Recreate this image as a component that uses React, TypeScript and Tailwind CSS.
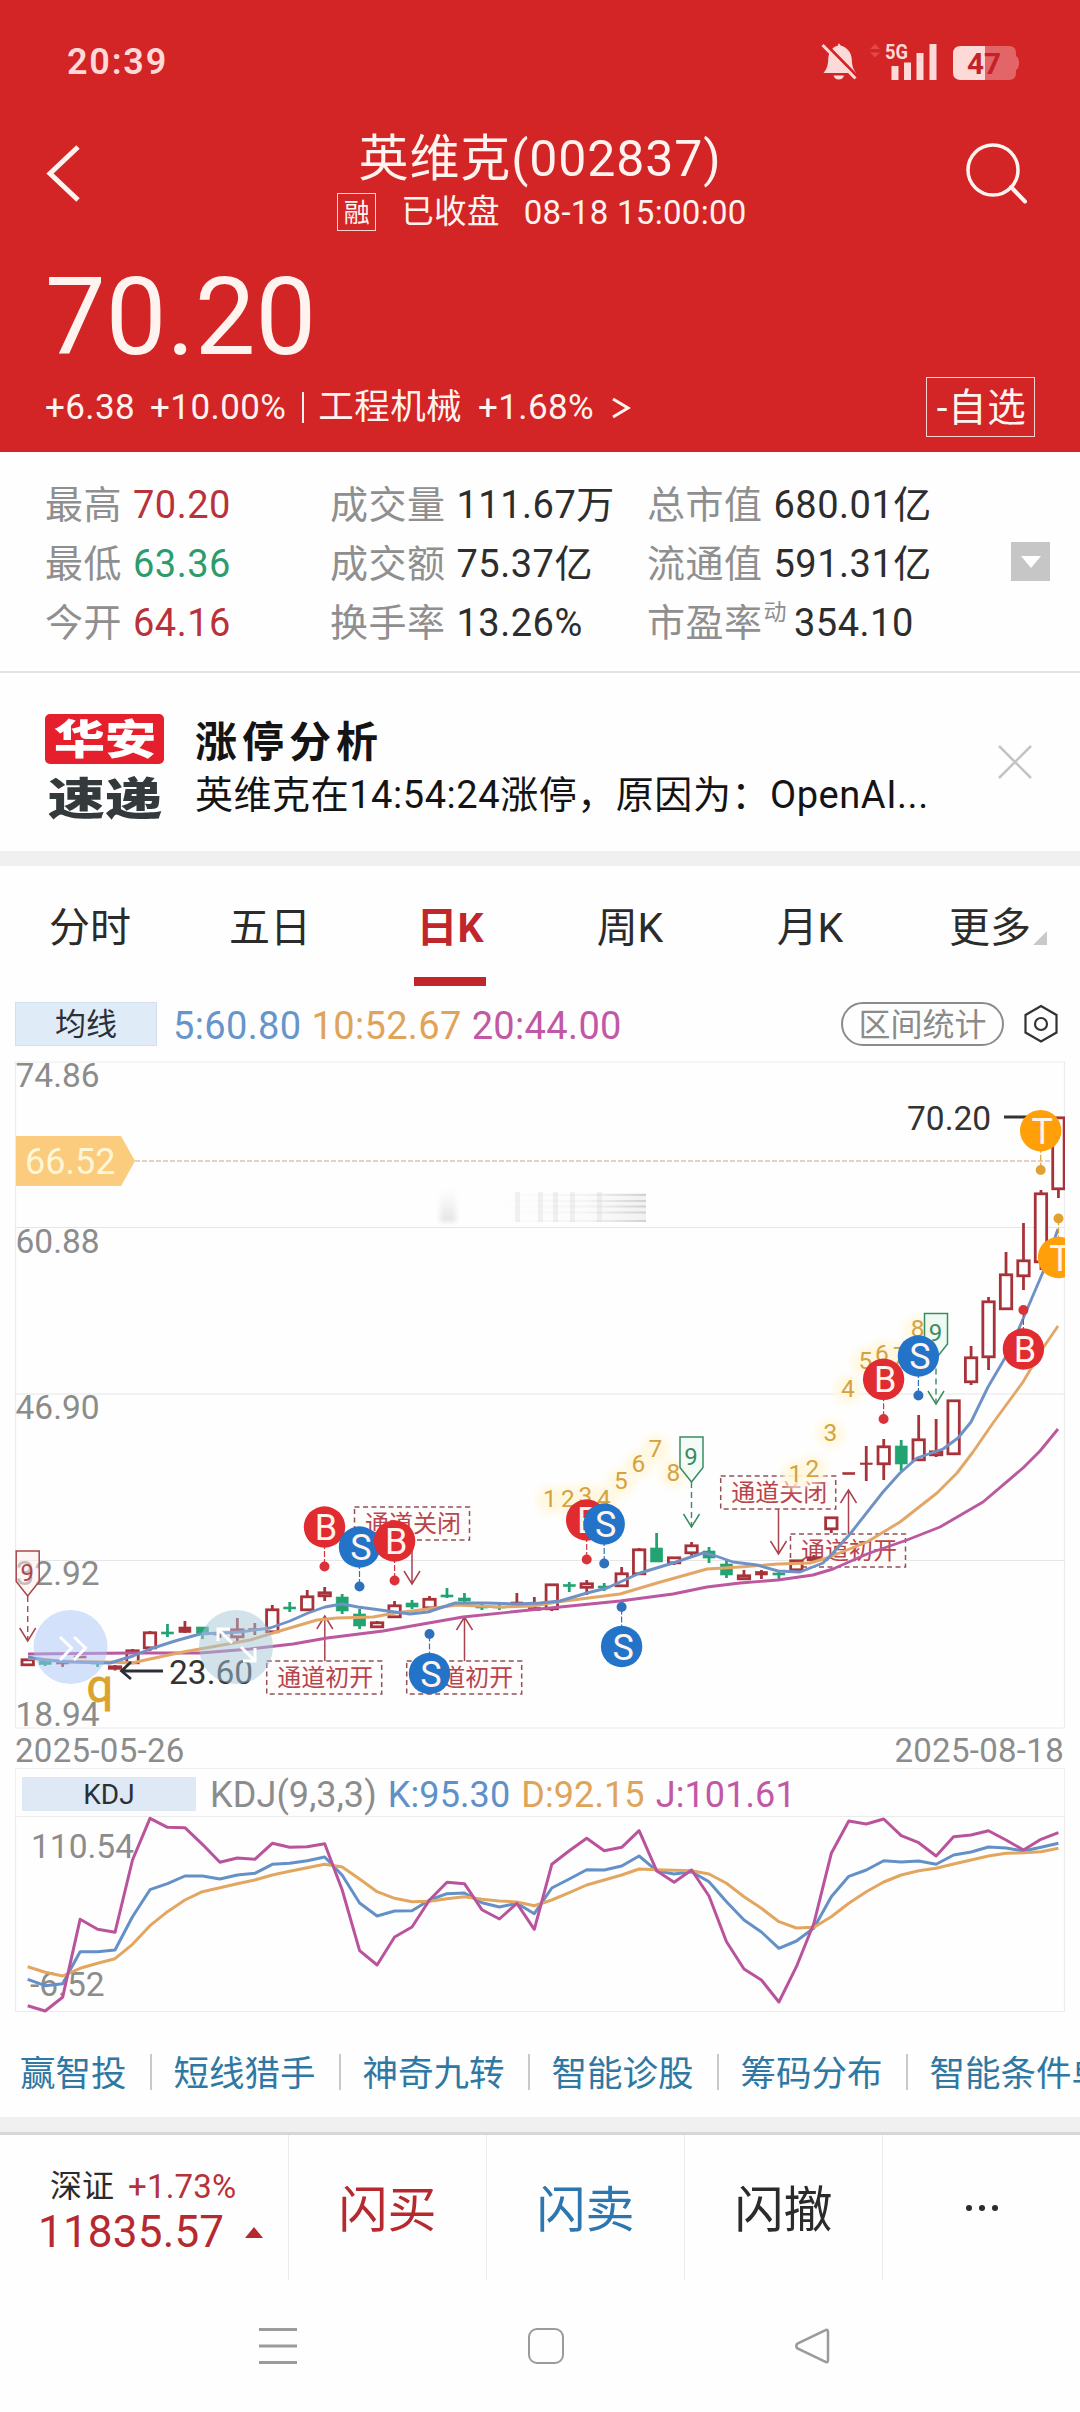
import React from 'react';

type Kind = 'up' | 'down';

// [kind, high, bodyTop, bodyBottom, low, solid?]
type Candle = [Kind, number, number, number, number, boolean?];

const STEP = 17.47;
const START_X = 27.7;
const candleX = (i: number) => START_X + i * STEP;

const UP = '#a8323a';
const DOWN = '#22a472';

const candles: Candle[] = [
    ['up', 1659, 1659, 1665, 1665],
    ['down', 1658, 1659.5, 1664.5, 1666],
    ['up', 1660, 1662, 1664, 1667, true],
    ['up', 1656, 1656, 1658, 1658, true],
    ['down', 1661, 1663, 1664, 1667],
    ['up', 1665, 1666, 1668.5, 1670.5],
    ['up', 1649, 1650, 1663, 1664],
    ['up', 1631, 1632, 1648, 1651],
    ['down', 1624, 1632, 1634, 1637],
    ['up', 1621, 1627, 1632.5, 1633, true],
    ['down', 1627, 1627, 1633, 1639],
    ['up', 1630, 1633, 1635, 1638, true],
    ['up', 1618, 1629, 1637, 1641],
    ['up', 1623, 1628.5, 1630, 1635, true],
    ['up', 1605, 1609, 1632, 1632],
    ['down', 1602, 1607, 1609, 1612],
    ['up', 1590, 1596, 1610, 1611],
    ['up', 1587, 1592, 1596, 1601],
    ['down', 1594, 1597, 1611, 1614],
    ['down', 1609, 1614, 1626, 1629],
    ['up', 1621, 1622, 1627, 1628],
    ['up', 1601, 1605, 1617, 1618],
    ['down', 1600, 1603, 1607, 1609],
    ['up', 1596, 1598.5, 1608, 1613],
    ['down', 1588, 1595, 1597, 1598],
    ['down', 1593, 1598, 1601, 1602],
    ['down', 1604, 1606, 1608, 1610],
    ['down', 1604, 1607, 1608, 1610],
    ['up', 1593, 1602, 1603, 1604, true],
    ['up', 1597, 1607.5, 1610.5, 1611, true],
    ['up', 1584, 1584, 1609, 1611],
    ['down', 1582, 1584.5, 1586.5, 1592],
    ['up', 1580, 1583, 1587.5, 1595],
    ['down', 1583, 1586, 1588, 1591],
    ['up', 1567, 1573, 1586, 1587],
    ['up', 1548, 1549, 1574, 1574],
    ['down', 1533, 1548, 1562, 1562],
    ['up', 1557, 1557, 1563, 1565],
    ['up', 1542, 1545, 1553, 1557],
    ['down', 1547, 1551, 1558, 1563],
    ['down', 1560, 1564, 1575, 1578],
    ['up', 1570, 1575, 1579, 1580],
    ['up', 1570, 1571.5, 1575, 1579, true],
    ['down', 1570, 1573, 1575, 1579],
    ['up', 1560, 1560, 1570, 1573],
    ['up', 1555, 1557, 1560, 1562],
    ['up', 1517, 1517, 1529, 1533],
    ['up', 1473, 1472.5, 1474.5, 1474, true],
    ['up', 1446, 1463, 1464.5, 1481, true],
    ['up', 1439, 1446, 1464, 1480],
    ['down', 1440, 1446, 1464, 1471],
    ['up', 1415, 1439, 1460, 1461],
    ['up', 1419, 1451, 1455, 1457],
    ['up', 1400, 1400, 1454, 1454],
    ['up', 1346, 1357, 1382, 1385],
    ['up', 1297, 1301, 1357, 1370],
    ['up', 1252, 1274, 1309, 1309],
    ['up', 1223, 1260, 1276, 1290],
    ['up', 1190, 1193, 1262, 1270],
    ['up', 1117, 1117, 1189, 1198],
];

const ma5 = '28,1657 45,1660 70,1662 110,1663 133,1656 150,1649 175,1641 200,1634 240,1632 270,1628 290,1621 308,1613 325,1607 342,1604 358,1607 395,1612 410,1614 428,1612 455,1603 487,1603 517,1604 540,1603 560,1601 587,1593 607,1588 640,1573 673,1563 703,1553 713,1555 733,1562 757,1565 778,1571 800,1572 823,1563 833,1553 850,1534 883,1492 900,1473 917,1458 943,1449 958,1438 971,1422 988,1387 1005,1358 1017,1333 1043,1272 1058,1229';
const ma10 = '28,1658 60,1661 107,1662 132,1663 150,1659 183,1652 217,1646 250,1640 283,1630 317,1620 337,1618 373,1617 395,1613 420,1610 457,1605 500,1607 533,1606 557,1602 620,1594 657,1583 707,1569 740,1567 778,1564 810,1563 827,1558 867,1542 900,1522 937,1493 957,1473 973,1452 993,1423 1023,1382 1043,1348 1058,1326';
const ma20 = '28,1654 133,1653 200,1653 250,1649 293,1644 327,1638 383,1631 463,1617 540,1609 620,1601 673,1594 707,1587 740,1583 778,1580 813,1575 833,1569 867,1554 907,1540 940,1527 983,1502 1023,1468 1040,1451 1058,1429';

const kdjJ = [857, 873, 832, 598, 628, 637, 420, 295, 322, 323, 373, 427, 414, 418, 370, 382, 380, 371, 510, 692, 735, 651, 621, 540, 487, 491, 569, 597, 550, 628, 433, 392, 355, 392, 382, 332, 452, 487, 450, 528, 665, 747, 780, 846, 740, 610, 400, 303, 312, 297, 347, 368, 408, 350, 345, 332, 360, 390, 358, 338];
const kdjK = [778, 797, 791, 695, 695, 690, 590, 509, 491, 468, 468, 477, 465, 460, 433, 430, 422, 411, 466, 549, 588, 573, 572, 540, 521, 519, 548, 561, 550, 581, 504, 477, 449, 450, 438, 408, 452, 462, 455, 485, 545, 600, 636, 685, 663, 624, 530, 469, 450, 422, 426, 423, 433, 405, 396, 381, 384, 393, 382, 370];
const kdjD = [740, 757, 768, 745, 730, 716, 673, 617, 575, 540, 515, 503, 491, 480, 465, 454, 443, 433, 441, 477, 515, 535, 545, 544, 536, 530, 538, 543, 546, 557, 540, 518, 495, 480, 465, 447, 449, 451, 452, 462, 490, 530, 565, 605, 624, 622, 590, 550, 515, 486, 465, 452, 445, 432, 420, 408, 400, 398, 395, 385];

const toLine = (values: number[]) =>
    values.map((v, i) => `${candleX(i).toFixed(1)},${(1720 + v / 3).toFixed(1)}`).join(' ');

interface MarkerProps {
    x: number;
    y: number;
    dot: number;
    label: 'B' | 'S' | 'T';
}

const markerColors = { B: '#e02b30', S: '#2374c8', T: '#ff9f0a' };
const dotColors = { B: '#d8333a', S: '#2f70bd', T: '#dfa232' };

const Marker: React.FC<MarkerProps> = ({ x, y, dot, label }) => (
    <g>
        <line x1={x} y1={y} x2={x} y2={dot} stroke={dotColors[label]} strokeWidth="1.2" strokeDasharray="6 2" />
        <circle cx={x} cy={dot} r="5" fill={dotColors[label]} />
        <circle cx={x} cy={y} r="20.7" fill={markerColors[label]} />
        <text x={x + 1.5} y={y + 13} fontSize="36" textAnchor="middle" fill="#fff3ee">{label}</text>
    </g>
);

const markers: MarkerProps[] = [
    { x: 324.5, y: 1527, dot: 1566.5, label: 'B' },
    { x: 359.5, y: 1547, dot: 1586.5, label: 'S' },
    { x: 394.6, y: 1541, dot: 1580.5, label: 'B' },
    { x: 429.5, y: 1673.5, dot: 1634, label: 'S' },
    { x: 586.7, y: 1520, dot: 1559.5, label: 'B' },
    { x: 604.2, y: 1524, dot: 1563.5, label: 'S' },
    { x: 621.6, y: 1646.5, dot: 1607, label: 'S' },
    { x: 883.6, y: 1379.3, dot: 1419, label: 'B' },
    { x: 918.4, y: 1356, dot: 1395.5, label: 'S' },
    { x: 1023.4, y: 1349, dot: 1310, label: 'B' },
    { x: 1040.7, y: 1130.7, dot: 1170, label: 'T' },
    { x: 1058.5, y: 1257.5, dot: 1218.5, label: 'T' },
];

interface ChannelProps {
    x: number;
    y: number;
    text: string;
    arrowX: number;
    tip: number;
}

const Channel: React.FC<ChannelProps> = ({ x, y, text, arrowX, tip }) => {
    const down = tip > y;
    const from = down ? y + 33 : y;
    const d = down ? -13 : 13;
    return (
        <g>
            <path d={`M${arrowX} ${from}V${tip}M${arrowX - 8} ${tip + d}L${arrowX} ${tip}L${arrowX + 8} ${tip + d}`} fill="none" stroke="#a8434f" strokeWidth="1.5" />
            <rect x={x} y={y} width="115" height="33" fill="#fffafa" fillOpacity="0.5" stroke="#905058" strokeWidth="1.5" strokeDasharray="5 3.5" />
            <text x={x + 10.5} y={y + 24.500} fontSize="24" fill="#b8444c">{text}</text>
        </g>
    );
};

const channels: ChannelProps[] = [
    { x: 354.5, y: 1507, text: '通道关闭', arrowX: 412, tip: 1584 },
    { x: 266.7, y: 1661, text: '通道初开', arrowX: 324.8, tip: 1616 },
    { x: 406.7, y: 1661, text: '通道初开', arrowX: 464.5, tip: 1617 },
    { x: 720.7, y: 1476, text: '通道关闭', arrowX: 778.5, tip: 1554 },
    { x: 790.5, y: 1534, text: '通道初开', arrowX: 848.5, tip: 1490 },
];

const counts: [string, number, number][] = [
    ['1', 550, 1507], ['2', 568, 1507], ['3', 585.5, 1504], ['4', 604, 1507],
    ['5', 621, 1489], ['6', 638.5, 1471.5], ['7', 655.5, 1456.5], ['8', 673.5, 1481],
    ['1', 795.5, 1482], ['2', 812.5, 1476.5], ['3', 830.5, 1440.5], ['4', 848, 1396.5],
    ['5', 865.5, 1368.5], ['6', 882, 1361.5], ['7', 900, 1364], ['8', 917.7, 1337],
];

interface NineTagProps {
    x: number;
    y: number;
    end: number;
    stroke: string;
    fill: string;
    baseline: number;
}

const NineTag: React.FC<NineTagProps> = ({ x, y, end, stroke, fill, baseline }) => (
    <g>
        <path d={`M${x - 11.5} ${y}H${x + 11.5}V${y + 30.5}L${x} ${y + 45}L${x - 11.5} ${y + 30.5}Z`} fill={fill} fillOpacity="0.5" stroke={stroke} strokeWidth="1.5" />
        <line x1={x} y1={y + 45} x2={x} y2={end} stroke={stroke} strokeWidth="1.4" strokeDasharray="6 4" />
        <path d={`M${x - 8} ${end - 13}L${x} ${end}L${x + 8} ${end - 13}`} fill="none" stroke={stroke} strokeWidth="1.5" />
        <text x={x - 0.5} y={baseline} fontSize="24" textAnchor="middle" fill={stroke}>9</text>
    </g>
);

const StatusBar = () => (
    <div className="flex h-[124px] items-center justify-between pl-[67px] pr-[60px]">
        <span className="text-[36px] font-semibold leading-none tracking-[1.8px] text-[#fdd9d7]">20:39</span>
        <svg width="200" height="44" viewBox="820 40 200 44">
            <path d="M838 45.500q0-2 1-2q1 0 1.500 2c7 1.500 11 7.500 11.300 14c.2 7 1.500 9.500 4.300 13.500H823.500c3.500-4 4.600-8.500 4.700-13.500c.3-7 3.800-12.500 9.800-14Z" fill="#fdd9d7" />
            <path d="M833.500 75.500h10.500q-1 4-5.200 4t-5.300-4Z" fill="#fdd9d7" />
            <path d="M824.500 43L858 77" stroke="#d32426" strokeWidth="3" />
            <path d="M822.500 45L855.500 78.500" stroke="#fdd9d7" strokeWidth="3" />
            <path d="M870 49l5-5l5 5ZM870 52.500l5 5l5-5Z" fill="#e2494b" />
            <text x="885" y="58.500" fontSize="21" fontWeight="700" textLength="23" lengthAdjust="spacingAndGlyphs" fill="#fdd9d7">5G</text>
            <path d="M891.500 66h7v14h-7zM904 62.500h7V80h-7zM916.500 53h7v27h-7zM929.500 44h7v36h-7z" fill="#fdd9d7" />
            <path d="M961 46h48q7 0 7 7v3q3 1.500 3 7t-3 7v3q0 7-7 7h-48q-8 0-8-8V54q0-8 8-8Z" fill="#e46567" />
            <path d="M985 46h-24q-8 0-8 8v18q0 8 8 8h24Z" fill="#fdd9d7" />
            <text x="967" y="74" fontSize="30" fontWeight="700" textLength="34" lengthAdjust="spacingAndGlyphs" fill="#c32328">47</text>
        </svg>
    </div>
);

const Header = () => (
    <header className="flex h-[452px] flex-col bg-[#d32426] text-[#fff3f0]">
        <StatusBar />
        <div className="flex h-[116px] justify-between pl-[46px] pr-[52px]">
            <svg width="70" height="60" viewBox="0 0 70 60" className="mt-[19px]">
                <path d="M32 4L4 30.500L32 57" fill="none" stroke="#fff3f0" strokeWidth="5" />
            </svg>
            <div className="flex flex-col items-center pt-[7px]">
                <h1 className="text-[50px] leading-[56px] tracking-[0.900px]">英维克(002837)</h1>
                <div className="mt-[3px] flex h-[44px] items-center pl-[4px] text-[33px] leading-none tracking-[0.300px]">
                    <span className="flex h-[38px] w-[39px] items-center justify-center border border-[#fbd5d3] pt-[1px] text-[26px]">融</span>
                    <span className="ml-[25px] text-[32.500px]">已收盘</span>
                    <span className="ml-[24px]">08-18 15:00:00</span>
                </div>
            </div>
            <svg width="64" height="64" viewBox="0 0 64 64" className="mt-[19px]">
                <circle cx="29" cy="27" r="25" fill="none" stroke="#fff3f0" strokeWidth="3.500" />
                <path d="M47 44L61 58.500" stroke="#fff3f0" strokeWidth="4" strokeLinecap="round" />
            </svg>
        </div>
        <div className="flex h-[134px] items-center pl-[45px] pt-[19px] text-[108px] leading-none">70.20</div>
        <div className="flex h-[66px] items-center justify-between pl-[45px] pr-[45px] text-[35px] leading-none">
            <div className="flex items-center pt-[1px] tracking-[0.400px]">
                <span>+6.38</span>
                <span className="ml-[15px]">+10.00%</span>
                <span className="ml-[16px] h-[31px] w-[2px] bg-[#fff3f0]" />
                <span className="ml-[14px] text-[35.500px]">工程机械</span>
                <span className="ml-[16px]">+1.68%</span>
                <svg width="20" height="24" viewBox="0 0 20 24" className="ml-[17px]">
                    <path d="M2 3L17 12L2 21" fill="none" stroke="#fff3f0" strokeWidth="3" />
                </svg>
            </div>
            <span className="flex h-[60px] w-[109px] items-center justify-center border-[1.500px] border-[#fbd5d3] pl-[2px] pt-[3px] text-[38.500px] tracking-[0.700px]">-自选</span>
        </div>
    </header>
);

interface Stat {
    label: string;
    value: string;
    color?: string;
    sup?: string;
}

const statColumns: { className: string; items: Stat[] }[] = [
    {
        className: 'w-[285px]',
        items: [
            { label: '最高', value: '70.20', color: 'text-[#b9313a]' },
            { label: '最低', value: '63.36', color: 'text-[#2c9c6c]' },
            { label: '今开', value: '64.16', color: 'text-[#b9313a]' },
        ],
    },
    {
        className: 'w-[317px]',
        items: [
            { label: '成交量', value: '111.67万' },
            { label: '成交额', value: '75.37亿' },
            { label: '换手率', value: '13.26%' },
        ],
    },
    {
        className: 'w-[364px]',
        items: [
            { label: '总市值', value: '680.01亿' },
            { label: '流通值', value: '591.31亿' },
            { label: '市盈率', value: '354.10', sup: '动' },
        ],
    },
];

const Stats = () => (
    <section className="flex h-[221px] items-start border-b-2 border-[#e2e2e2] pl-[45px] pt-[23px]">
        {statColumns.map((column, index) => (
            <div key={index} className={column.className}>
                {column.items.map((item) => (
                    <div key={item.label} className="flex h-[59px] items-center whitespace-nowrap text-[38px] leading-none tracking-[0.500px]">
                        <span className="text-[#8f8f8f]">{item.label}</span>
                        {item.sup && <span className="mb-[21px] ml-[1px] text-[23px] text-[#8f8f8f]">{item.sup}</span>}
                        <span className={`${item.sup ? 'ml-[7px]' : 'ml-[11px]'} ${item.color ?? 'text-[#2d2d2d]'}`}>{item.value}</span>
                    </div>
                ))}
            </div>
        ))}
        <div className="mt-[67px] flex h-[39px] w-[39px] items-center justify-center bg-[#c6c6c6]">
            <svg width="20" height="12" viewBox="0 0 20 12"><path d="M0 0H20L10 12Z" fill="#fff" /></svg>
        </div>
    </section>
);

const Notice = () => (
    <section className="flex h-[178px] items-center pl-[45px] pr-[47px]">
        <div className="flex w-[119px] flex-col items-center pt-[15px] font-black">
            <div className="flex h-[50px] w-[119px] items-center justify-center rounded-[5px] bg-[#e5202c] pt-[3px] text-white">
                <span className="scale-x-[1.250] text-[41px] leading-none">华安</span>
            </div>
            <div className="mt-[11px] flex h-[50px] items-center text-[#34393c]">
                <span className="scale-x-[1.300] text-[44px] leading-none">速递</span>
            </div>
        </div>
        <div className="ml-[31px] flex-1 pt-[12px] text-[#141414]">
            <div className="text-[42px] font-bold leading-[54px] tracking-[5px]">涨停分析</div>
            <div className="whitespace-nowrap text-[38px] leading-[50px] tracking-[0.550px]">英维克在14:54:24涨停，原因为：OpenAI...</div>
        </div>
        <svg width="36" height="36" viewBox="0 0 36 36"><path d="M2 2L34 34M34 2L2 34" stroke="#c4c4c4" strokeWidth="2.500" /></svg>
    </section>
);

const periods = ['分时', '五日', '日K', '周K', '月K', '更多'];

const Tabs = () => (
    <nav className="grid h-[121px] grid-cols-6 text-[41px] leading-none text-[#2b2b2b]">
        {periods.map((period) => {
            const active = period === '日K';
            return (
                <div key={period} className="relative flex flex-col items-center">
                    <span className={`flex h-[111px] items-center pt-[14px] ${active ? 'font-bold text-[#c0262c]' : ''}`}>{period}</span>
                    {active && <span className="h-[9px] w-[72px] bg-[#c0262c]" />}
                    {period === '更多' && (
                        <svg width="14" height="14" viewBox="0 0 14 14" className="absolute right-[33px] top-[65px]">
                            <path d="M14 0V14H0Z" fill="#c9c9c9" />
                        </svg>
                    )}
                </div>
            );
        })}
    </nav>
);

const MaBar = () => (
    <div className="flex h-[73px] items-center pl-[15px] pr-[21px] leading-none">
        <span className="flex h-[44px] w-[142px] items-center justify-center border border-[#d3dfec] bg-[#e0ebf8] pt-[2px] text-[31px] text-[#2b2f36]">均线</span>
        <div className="ml-[16px] flex flex-1 gap-[10px] pt-[4px] text-[38px] tracking-[0.350px]">
            <span className="text-[#6794cb]">5:60.80</span>
            <span className="text-[#e0a35a]">10:52.67</span>
            <span className="text-[#c257a6]">20:44.00</span>
        </div>
        <span className="flex h-[44px] w-[163px] items-center justify-center rounded-full border-2 border-[#8b8b8b] pt-[2px] text-[32px] text-[#8b8b8b]">区间统计</span>
        <svg width="36" height="40" viewBox="0 0 36 40" className="ml-[19px]">
            <path d="M18 2L33.500 11V28.500L18 37.500L2.500 28.500V11Z" fill="none" stroke="#333" strokeWidth="2.200" />
            <circle cx="18" cy="20" r="6" fill="none" stroke="#333" strokeWidth="2.200" />
        </svg>
    </div>
);

const PriceChart = () => (
    <svg width="1080" height="672" viewBox="0 1060 1080 672" className="block overflow-visible">
        <defs>
            <linearGradient id="smear" x1="0" x2="1">
                <stop offset="0" stopColor="#bbb" stopOpacity="0" />
                <stop offset="0.6" stopColor="#bbb" stopOpacity="0.12" />
                <stop offset="1" stopColor="#aaa" stopOpacity="0.45" />
            </linearGradient>
            <linearGradient id="smudge" x1="0" x2="0" y1="0" y2="1">
                <stop offset="0" stopColor="#ddd" stopOpacity="0" />
                <stop offset="1" stopColor="#ccc" stopOpacity="0.55" />
            </linearGradient>
            <filter id="glow" x="-100%" y="-100%" width="300%" height="300%">
                <feGaussianBlur stdDeviation="3.500" />
            </filter>
            <filter id="soft" x="-50%" y="-50%" width="200%" height="200%">
                <feGaussianBlur stdDeviation="2.500" />
            </filter>
            <clipPath id="plot"><rect x="15" y="1060" width="1050" height="670" /></clipPath>
        </defs>

        {/* Grid */}
        <path d="M15.500 1062V1728H1064.500V1062Z" fill="none" stroke="#ececec" strokeWidth="1.200" />
        <path d="M15 1227.500H1065M15 1394H1065M15 1560.500H1065" stroke="#e6e6e6" strokeWidth="1.200" />
        <rect x="440" y="1188" width="16" height="34" fill="url(#smudge)" filter="url(#soft)" />
        {[1194, 1200, 1205.5, 1211.5, 1220].map((y) => (
            <rect key={y} x="500" y={y} width="146" height="2" fill="url(#smear)" />
        ))}
        {[517, 540, 555, 572, 599].map((x) => (
            <rect key={x} x={x - 2} y="1192" width="5" height="30" fill="#ccc" fillOpacity="0.25" />
        ))}
        <rect x="500" y="1193" width="146" height="29" fill="url(#smear)" opacity="0.35" />

        {/* Previous close */}
        <line x1="135" y1="1161" x2="1064" y2="1161" stroke="#e3bfae" strokeWidth="1.300" strokeDasharray="5 2" />
        <path d="M16 1136H121L135 1161L121 1186H16Z" fill="#fbcb7e" />
        <text x="25" y="1174" fontSize="36" fill="#fff6d6">66.52</text>

        <g fontSize="33.500" fill="#8c8c8c">
            <text x="15.500" y="1087">74.86</text>
            <text x="15.500" y="1253">60.88</text>
            <text x="15.500" y="1419">46.90</text>
            <text x="15.500" y="1584.500">32.92</text>
            <text x="15.500" y="1725.500">18.94</text>
        </g>

        {channels.map((channel) => <Channel key={channel.x} {...channel} />)}

        {/* Sequence counts */}
        {counts.map(([, x, y], i) => (
            <circle key={i} cx={x} cy={y - 7} r="14" fill="#fff7df" fillOpacity="0.9" filter="url(#glow)" />
        ))}
        <g fontSize="24.500" fill="#d5a23f" textAnchor="middle">
            {counts.map(([label, x, y], i) => <text key={i} x={x} y={y}>{label}</text>)}
        </g>

        <g clipPath="url(#plot)">
            {candles.map(([kind, high, top, bottom, low, solid], i) => {
                const x = candleX(i);
                const color = kind === 'up' ? UP : DOWN;
                const filled = solid || kind === 'down';
                return (
                    <g key={i} stroke={color} strokeWidth="2.800">
                        <line x1={x} y1={high} x2={x} y2={low} />
                        <rect
                            x={x - (filled ? 6 : 5.7)}
                            y={filled ? top : top + 0.8}
                            width={filled ? 12 : 11.4}
                            height={Math.max(filled ? bottom - top : bottom - top - 1, 1)}
                            fill={filled ? color : '#fff'}
                            strokeWidth={filled ? 0.6 : 2.8}
                        />
                    </g>
                );
            })}
        </g>

        <g fill="none" strokeWidth="2.900" strokeLinejoin="round">
            <polyline points={ma20} stroke="#bb589f" />
            <polyline points={ma10} stroke="#e2a767" />
            <polyline points={ma5} stroke="#6f92c6" />
        </g>

        <NineTag x={27.7} y={1551} end={1641} stroke="#a9484e" fill="#fdeeea" baseline={1581} />
        <NineTag x={691.5} y={1437} end={1527} stroke="#3a8c63" fill="#e9f8ef" baseline={1465} />
        <NineTag x={936} y={1313.5} end={1404} stroke="#3a8c63" fill="#e0f5e9" baseline={1340.5} />

        {/* Low and high callouts */}
        <path d="M163 1671H122M131 1662L121.500 1671L131 1679" fill="none" stroke="#2c3036" strokeWidth="2.800" />
        <text x="169" y="1683.500" fontSize="33.500" fill="#333">23.60</text>
        <path d="M1004 1117H1045" stroke="#333" strokeWidth="2.800" />
        <text x="907" y="1129.500" fontSize="33.500" fill="#333">70.20</text>
        <text x="86.500" y="1701.500" fontSize="47" fill="#dba32b" stroke="#dba32b" strokeWidth="0.800">q</text>

        {/* Floating buttons */}
        <circle cx="70.500" cy="1647" r="37" fill="#a9c4f8" fillOpacity="0.5" />
        <path d="M60 1637L71.500 1648L60 1660M74 1637L85.500 1648L74 1660" fill="none" stroke="#fff" strokeWidth="3" />
        <circle cx="236" cy="1647" r="37" fill="#a3c6d8" fillOpacity="0.5" />
        <path d="M218 1641V1629H230M219 1630L232 1643M255 1648V1661H243M254 1660L241 1647" fill="none" stroke="#fff" strokeWidth="3" />

        <g clipPath="url(#plot)">
            {markers.map((marker) => <Marker key={marker.x} {...marker} />)}
        </g>
    </svg>
);

const KdjPanel = () => (
    <section>
        <div className="flex h-[36px] items-center justify-between pl-[15px] pr-[16px] text-[33px] leading-none tracking-[0.300px] text-[#8c8c8c]">
            <span>2025-05-26</span>
            <span>2025-08-18</span>
        </div>
        <div className="mx-[15px] flex h-[48px] items-center border border-b-0 border-[#efefef] pl-[6px] text-[36px] leading-none">
            <span className="mt-[2px] flex h-[34px] w-[174px] items-center justify-center bg-[#dfe8f5] pt-[2px] text-[28px] text-[#2b2f36]">KDJ</span>
            <div className="ml-[14px] flex gap-[11px] pt-[4px] tracking-[0.100px]">
                <span className="text-[#8c8c8c]">KDJ(9,3,3)</span>
                <span className="text-[#5f90c8]">K:95.30</span>
                <span className="text-[#e0a35a]">D:92.15</span>
                <span className="text-[#c257a6]">J:101.61</span>
            </div>
        </div>
        <svg width="1080" height="198" viewBox="0 1816 1080 198" className="block">
            <path d="M15.500 1816.500H1064.500V2011.500H15.500Z" fill="none" stroke="#ececec" strokeWidth="1.200" />
            <g fontSize="33.500" fill="#8c8c8c">
                <text x="31" y="1858">110.54</text>
                <text x="30" y="1996">-6.52</text>
            </g>
            <g fill="none" strokeWidth="3" strokeLinejoin="round">
                <polyline points={toLine(kdjK)} stroke="#6390c6" />
                <polyline points={toLine(kdjD)} stroke="#e2a660" />
                <polyline points={toLine(kdjJ)} stroke="#b9549c" />
            </g>
        </svg>
    </section>
);

const tools = ['赢智投', '短线猎手', '神奇九转', '智能诊股', '筹码分布', '智能条件单'];

const ToolLinks = () => (
    <div className="flex h-[103px] items-center overflow-hidden whitespace-nowrap pl-[20px] pt-[19px] text-[35.500px] leading-none text-[#2f78a3]">
        {tools.map((tool, index) => (
            <React.Fragment key={tool}>
                {index > 0 && <span className="ml-[23px] mr-[22px] mb-[6px] h-[36px] w-[2px] shrink-0 bg-[#c9c9c9]" />}
                <span className="shrink-0">{tool}</span>
            </React.Fragment>
        ))}
    </div>
);

const actions = [
    { label: '闪买', color: 'text-[#b5292f]' },
    { label: '闪卖', color: 'text-[#2d77b0]' },
    { label: '闪撤', color: 'text-[#2b2b2b]' },
];

const BottomBar = () => (
    <div className="flex h-[148px] border-t-[3px] border-[#d6d6d6]">
        <div className="flex w-[288px] flex-col pl-[38px] pt-[34px] leading-none">
            <div className="flex h-[34px] items-center pl-[12px] text-[33px]">
                <span className="text-[32px] text-[#2b2b2b]">深证</span>
                <span className="ml-[14px] tracking-[0.200px] text-[#b5323a]">+1.73%</span>
            </div>
            <div className="mt-[7px] flex h-[44px] items-center text-[44px] tracking-[0.200px] text-[#b5292f]">
                <span>11835.57</span>
                <svg width="18" height="11" viewBox="0 0 18 11" className="ml-[21px]"><path d="M9 0L18 11H0Z" fill="#b5292f" /></svg>
            </div>
        </div>
        {actions.map((action) => (
            <div key={action.label} className={`flex w-[198px] items-center justify-center border-l border-[#ebebeb] pt-[5px] text-[49px] leading-none ${action.color}`}>
                {action.label}
            </div>
        ))}
        <div className="flex flex-1 items-center justify-center gap-[7px] border-l border-[#ebebeb]">
            <span className="h-[6px] w-[6px] rounded-full bg-[#2b2b2b]" />
            <span className="h-[6px] w-[6px] rounded-full bg-[#2b2b2b]" />
            <span className="h-[6px] w-[6px] rounded-full bg-[#2b2b2b]" />
        </div>
    </div>
);

const SystemNav = () => (
    <div className="flex h-[132px] items-center pl-[259px]">
        <svg width="38" height="38" viewBox="0 0 38 38"><path d="M0 2.500H38M0 19H38M0 35.500H38" stroke="#9b9b9b" strokeWidth="3" /></svg>
        <span className="ml-[231px] h-[36px] w-[36px] rounded-[9px] border-[2.500px] border-[#9b9b9b]" />
        <svg width="36" height="38" viewBox="0 0 36 38" className="ml-[230px]">
            <path d="M31 3.500Q34 1.500 34 5V33Q34 36.500 31 34.500L3.500 21.500Q1 19 3.500 16.500Z" fill="none" stroke="#9b9b9b" strokeWidth="2.500" />
        </svg>
    </div>
);

const App = () => (
    <main className="h-[2412px] w-[1080px] overflow-hidden bg-[#fefefe] font-['Roboto','Noto_Sans_CJK_SC',sans-serif]">
        <Header />
        <Stats />
        <Notice />
        <div className="h-[15px] bg-[#f0f0f0]" />
        <Tabs />
        <MaBar />
        <PriceChart />
        <KdjPanel />
        <ToolLinks />
        <div className="h-[15px] bg-[#f0f0f0]" />
        <BottomBar />
        <SystemNav />
    </main>
);

export default App;
